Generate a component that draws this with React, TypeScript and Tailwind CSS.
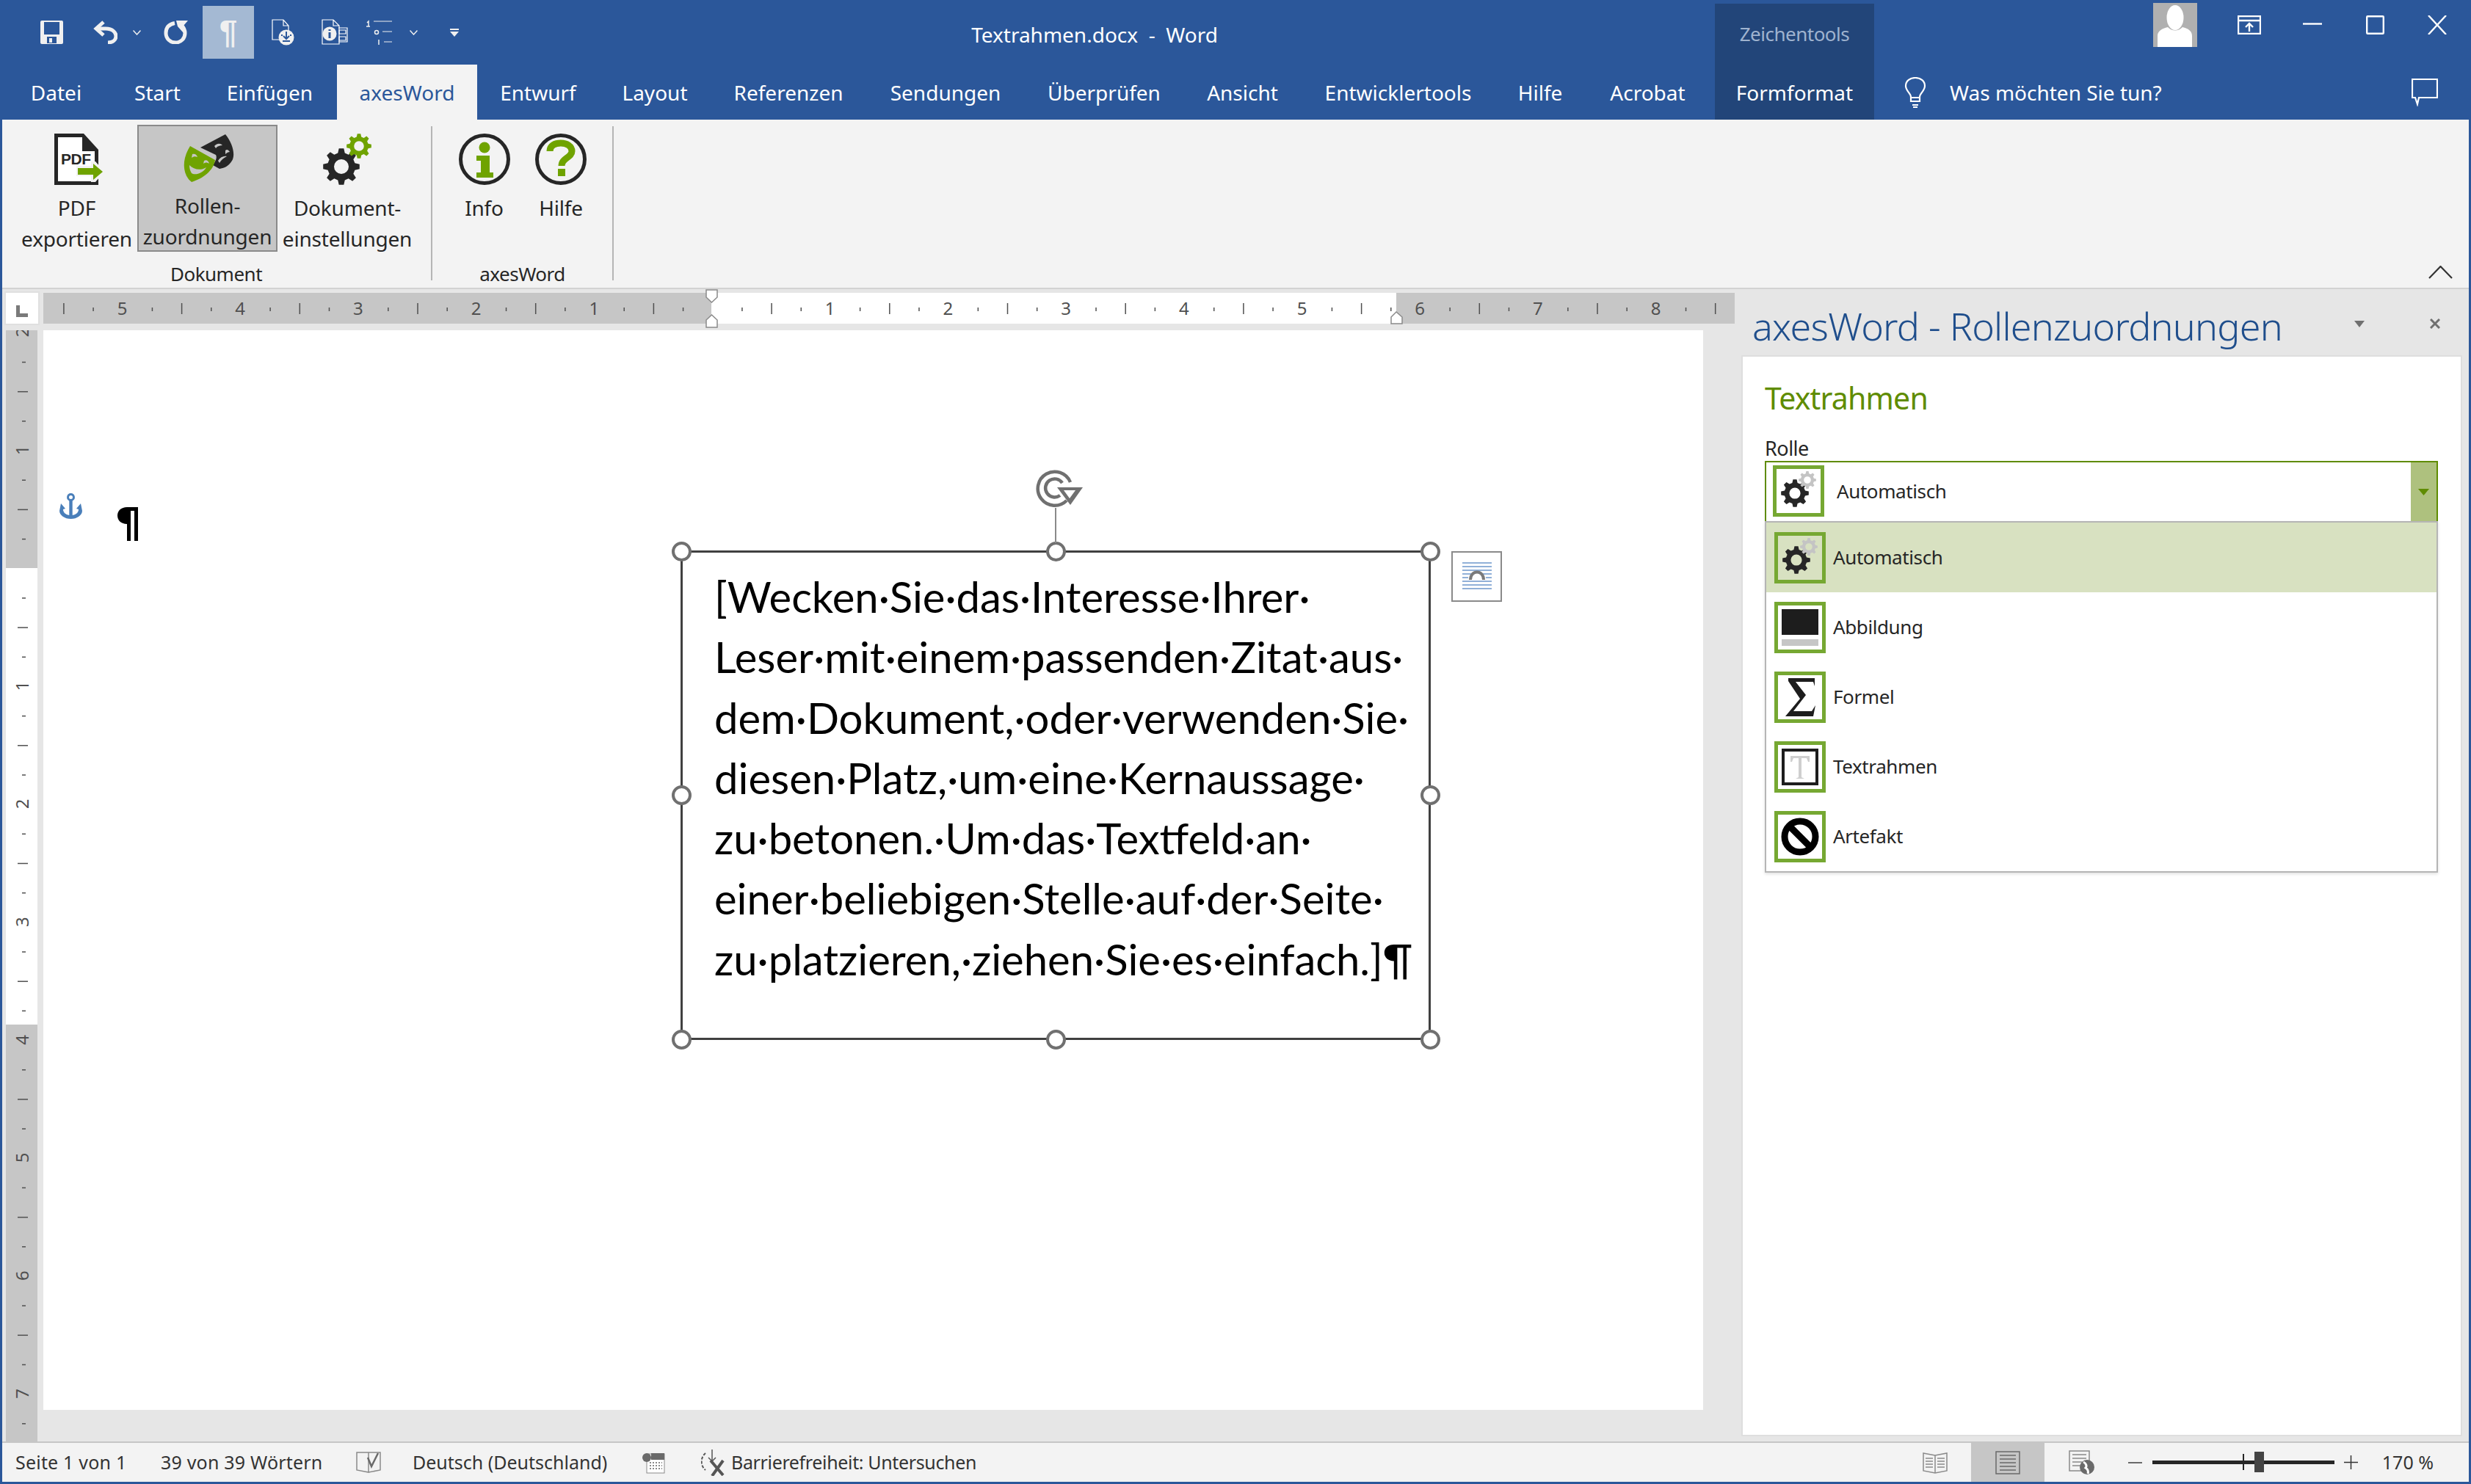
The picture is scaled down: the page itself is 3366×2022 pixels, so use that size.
import type { ReactNode } from 'react'

const TABS = [
  { label: 'Datei', w: 'w-[153px]' },
  { label: 'Start', w: 'w-[123px]' },
  { label: 'Einfügen', w: 'w-[183px]' },
  { label: 'axesWord', w: 'w-[191px]', active: true },
  { label: 'Entwurf', w: 'w-[166px]' },
  { label: 'Layout', w: 'w-[152px]' },
  { label: 'Referenzen', w: 'w-[212px]' },
  { label: 'Sendungen', w: 'w-[216px]' },
  { label: 'Überprüfen', w: 'w-[216px]' },
  { label: 'Ansicht', w: 'w-[161px]' },
  { label: 'Entwicklertools', w: 'w-[263px]' },
  { label: 'Hilfe', w: 'w-[124px]' },
  { label: 'Acrobat', w: 'w-[169px]' },
]

const TEXT_LINES = [
  '[Wecken·Sie·das·Interesse·Ihrer·',
  'Leser·mit·einem·passenden·Zitat·aus·',
  'dem·Dokument,·oder·verwenden·Sie·',
  'diesen·Platz,·um·eine·Kernaussage·',
  'zu·betonen.·Um·das·Textfeld·an·',
  'einer·beliebigen·Stelle·auf·der·Seite·',
  'zu·platzieren,·ziehen·Sie·es·einfach.]¶',
]

const HANDLES = [
  'left-[-15px] top-[-15px]',
  'left-[495px] top-[-15px]',
  'left-[1005px] top-[-15px]',
  'left-[-15px] top-[317px]',
  'left-[1005px] top-[317px]',
  'left-[-15px] top-[650px]',
  'left-[495px] top-[650px]',
  'left-[1005px] top-[650px]',
]

function gearPath(cx: number, cy: number, R: number, r: number, hole: number, n: number) {
  const pts: string[] = []
  const step = (Math.PI * 2) / n
  for (let i = 0; i < n; i++) {
    const a = i * step - Math.PI / 2
    const corners: [number, number][] = [
      [r, a - step * 0.32],
      [R, a - step * 0.17],
      [R, a + step * 0.17],
      [r, a + step * 0.32],
    ]
    corners.forEach(([rad, ang]) => {
      pts.push(`${(cx + rad * Math.cos(ang)).toFixed(2)} ${(cy + rad * Math.sin(ang)).toFixed(2)}`)
    })
  }
  const ring = `M${cx - hole} ${cy}a${hole} ${hole} 0 1 0 ${hole * 2} 0a${hole} ${hole} 0 1 0 ${-hole * 2} 0Z`
  return `M${pts.join('L')}Z${ring}`
}

function Gear(props: { cx: number; cy: number; R: number; fill: string }) {
  const { cx, cy, R, fill } = props
  return <path d={gearPath(cx, cy, R, R * 0.76, R * 0.4, 8)} fill={fill} fillRule="evenodd" />
}

/* Quick access toolbar */
function Qat() {
  const c = '#f0f0f0'
  return (
    <div className="flex items-center w-[1320px]">
      <svg className="ml-[55px]" width="31" height="32" viewBox="0 0 31 32">
        <path fillRule="evenodd" fill={c} d="M2 0H29a2 2 0 0 1 2 2V30a2 2 0 0 1-2 2H2a2 2 0 0 1-2-2V2a2 2 0 0 1 2-2ZM5 2V19H26V2ZM9 22V31H22V22ZM12 24H16V30H12Z" />
      </svg>
      <svg className="ml-[41px]" width="33" height="32" viewBox="0 0 33 32" fill="none" stroke={c} strokeWidth="5">
        <path d="M14 2 L4 11 L14 20" />
        <path d="M4 11H17C27 11 31 17 31 21C31 26 27 30 20 30" />
      </svg>
      <Chevron className="ml-[21px]" color={c} />
      <svg className="ml-[31px]" width="34" height="32" viewBox="0 0 34 32" fill="none">
        <path d="M15 3.5C7 5 3 10 3 17C3 25 9 30 16 30C24 30 29 24 29 17C29 12 27 9 24 6" stroke={c} strokeWidth="5" />
        <path d="M17 0H33L27 7V17L19 8Z" fill={c} />
      </svg>
      <div className="ml-[19px] flex h-[72px] w-[70px] items-center justify-center bg-[#a4b9d3]">
        <span className="font-['Liberation_Sans'] text-[44px] leading-none font-bold text-[#f0f0f0]">¶</span>
      </div>
      <svg className="ml-[24px]" width="32" height="36" viewBox="0 0 32 36" fill="none" stroke="#fff" strokeWidth="1.2">
        <path d="M1 1H16L23 9V28H1ZM16 1V9H23" />
        <circle cx="20" cy="25" r="10.5" fill="#f0f0f0" stroke="none" />
        <path d="M20 17V27M16 23L20 27L24 23M13 22H15M25 22H27M15 30H25" stroke="#2b579a" strokeWidth="2" />
      </svg>
      <svg className="ml-[36px]" width="36" height="36" viewBox="0 0 36 36" fill="none" stroke="#fff" strokeWidth="1.2">
        <path d="M1 1H16L24 9V34H1ZM16 1V9H24M23 12H35V31H23" />
        <circle cx="11" cy="20" r="9.5" fill="#f0f0f0" stroke="none" />
        <path d="M11 14V16M11 18V26" stroke="#2b579a" strokeWidth="3" />
        <path d="M24 15H33V20H24ZM24 24H33V29H24Z" />
      </svg>
      <svg className="ml-[25px]" width="36" height="36" viewBox="0 0 36 36" fill="none" stroke="#f0f0f0" strokeWidth="1.2">
        <path d="M10 3H35M22 17H35M24 31H35" />
        <path d="M1 5 3 3V10M0 10H5" strokeWidth="1.5" />
        <circle cx="14" cy="18" r="2.5" strokeWidth="1.5" />
        <path d="M17 28V35" strokeWidth="1.5" />
      </svg>
      <Chevron className="ml-[23px]" color={c} />
      <svg className="ml-[44px]" width="12" height="11" viewBox="0 0 12 11">
        <path d="M0 0H12V2H0ZM0 4H12L6 11Z" fill="#f0f0f0" />
      </svg>
    </div>
  )
}

function Chevron({ className, color }: { className: string; color: string }) {
  return (
    <svg className={className} width="11" height="7" viewBox="0 0 11 7" fill="none" stroke={color} strokeWidth="1.5">
      <path d="M0.5 0.5L5.5 6L10.5 0.5" />
    </svg>
  )
}

function WindowControls() {
  return (
    <div className="flex self-start mt-[21px]">
      <svg width="32" height="26" viewBox="0 0 32 26" fill="none" stroke="#fff" strokeWidth="2.4">
        <path d="M1 1H31V25H1ZM1 7H31M16 22V12M11 16L16 11L21 16" />
      </svg>
      <svg className="ml-[57px]" width="26" height="26" viewBox="0 0 26 26" fill="none" stroke="#fff" strokeWidth="2.4">
        <path d="M0 11.5H26" />
      </svg>
      <svg className="ml-[60px]" width="25" height="26" viewBox="0 0 25 26" fill="none" stroke="#fff" strokeWidth="2.4">
        <rect x="1.2" y="1.2" width="22.6" height="23.6" rx="1" />
      </svg>
      <svg className="ml-[59px]" width="26" height="26" viewBox="0 0 26 26" fill="none" stroke="#fff" strokeWidth="2.4">
        <path d="M1 0L25 26M25 0L1 26" />
      </svg>
    </div>
  )
}

function Header() {
  return (
    <div className="h-[163px] w-full shrink-0 bg-[#2b579a] text-white">
      <div className="flex h-[88px] items-center">
        <Qat />
        <div className="mt-[5px] w-[342px] whitespace-pre text-center text-[28px] text-white">Textrahmen.docx  -  Word</div>
        <div className="w-[674px]" />
        <div className="mt-[5px] flex w-[217px] items-center justify-center self-stretch bg-[#224579] text-[26px] tracking-[-0.5px] text-[#9fb3cf]">
          Zeichentools
        </div>
        <div className="w-[380px]" />
        <div className="mt-[4px] h-[60px] w-[60px] self-start bg-[#b0b0b0]">
          <svg width="60" height="60" viewBox="0 0 60 60">
            <ellipse cx="30" cy="20" rx="11.5" ry="17" fill="#fff" />
            <path d="M6 60V45C6 38 12 35 20 33C26 39 34 39 40 33C48 35 53 38 53 45V60Z" fill="#fff" />
          </svg>
        </div>
        <div className="w-[55px]" />
        <WindowControls />
      </div>
      <div className="flex h-[75px] items-stretch text-[28px]">
        {TABS.map(tab => (
          <div
            key={tab.label}
            className={`${tab.w} flex items-center justify-center ${tab.active ? 'bg-[#f3f3f3] text-[#2b579a]' : ''}`}
          >
            {tab.label}
          </div>
        ))}
        <div className="ml-[7px] flex w-[217px] items-center justify-center bg-[#224579]">Formformat</div>
        <svg className="ml-[41px] self-center" width="30" height="42" viewBox="0 0 30 42" fill="none" stroke="#fff" strokeWidth="2.2">
          <path d="M9 27C9 22 2 19 2 12C2 5 8 1 15 1C22 1 28 5 28 12C28 19 21 22 21 27V33H9ZM9 28H21" />
          <path d="M11 38H19M12 41H18" />
        </svg>
        <span className="ml-[32px] flex w-[629px] items-center">Was möchten Sie tun?</span>
        <svg className="self-center" width="36" height="38" viewBox="0 0 36 38" fill="none" stroke="#fff" strokeWidth="2.2">
          <path d="M1 1H35V26H10L8 35L5 26H1Z" />
        </svg>
      </div>
    </div>
  )
}

function RibbonButton(props: { w: string; icon: ReactNode; lines: string[]; active?: boolean }) {
  const { w, icon, lines, active } = props
  return (
    <div
      className={`${w} flex h-[173px] flex-col items-center ${active ? 'border-2 border-[#8a8a8a] bg-[#c6c6c6] pt-[11px]' : 'pt-[12px]'}`}
    >
      <div className="flex h-[70px] items-center justify-center">{icon}</div>
      <div className="mt-[10px] whitespace-nowrap text-center text-[28px] leading-[42px] tracking-[-0.2px] text-[#262626]">
        {lines.map(line => (
          <div key={line}>{line}</div>
        ))}
      </div>
    </div>
  )
}

function PdfIcon() {
  return (
    <svg className="ml-[6px]" width="68" height="70" viewBox="0 0 68 70">
      <path d="M0 0H40L60 22V70H0Z" fill="#262626" />
      <path d="M5 5H38V24H55V65H5Z" fill="#fff" />
      <text x="9" y="42" fontFamily="Liberation Sans" fontWeight="700" fontSize="21" fill="#262626" letterSpacing="-0.5">PDF</text>
      <path d="M30 44H50V38H56L68 52L56 66H50V58H30Z" fill="#f3f3f3" />
      <path d="M32 47H53V41L66 52L53 63V56H32Z" fill="#6fa300" />
    </svg>
  )
}

function MasksIcon() {
  const bg = '#c6c6c6'
  return (
    <svg width="72" height="66" viewBox="0 0 72 66">
      <path d="M26 18L60 0C70 12 74 28 69 36C64 44 58 46 52 47L43 42C47 36 49 32 47 28Z" fill="#262626" />
      <path d="M45 16C49 12 53 12 56 15C53 15 49 16 47 19ZM60 22C62 20 64 21 66 24C64 24 62 25 60 27ZM50 36C53 31 58 29 62 30C58 32 54 35 52 39Z" fill={bg} />
      <path d="M12 16L46 35C44 49 30 60 14 65C4 58 -2 38 12 16Z" fill="#6fa300" />
      <path d="M15 27C19 26 21 28 22 31C19 30 17 30 14 32ZM31 36C34 34 37 36 38 40C35 38 33 38 30 40ZM11 42C17 48 26 50 34 45C29 54 18 56 14 53C12 50 11 46 11 42Z" fill={bg} />
    </svg>
  )
}

function GearsIcon() {
  return (
    <svg width="66" height="70" viewBox="0 0 66 70">
      <Gear cx={25} cy={45} R={25} fill="#262626" />
      <Gear cx={49} cy={17} R={17} fill="#6fa300" />
    </svg>
  )
}

function InfoIcon() {
  return (
    <svg width="70" height="70" viewBox="0 0 70 70" fill="none">
      <circle cx="35" cy="35" r="32.5" stroke="#262626" strokeWidth="5" />
      <circle cx="35" cy="19" r="7.5" fill="#6fa300" />
      <path d="M24 30H42V53H47V60H24V53H30V37H24Z" fill="#6fa300" />
    </svg>
  )
}

function HelpIcon() {
  return (
    <svg width="70" height="70" viewBox="0 0 70 70" fill="none">
      <circle cx="35" cy="35" r="32.5" stroke="#262626" strokeWidth="5" />
      <path d="M20 24C20 16 27 13 35 13C43 13 50 17 50 24C50 33 36 33 36 44" stroke="#6fa300" strokeWidth="9" />
      <rect x="31" y="48" width="10" height="10" fill="#6fa300" />
    </svg>
  )
}

function Ribbon() {
  return (
    <div className="mx-[3px] flex h-[229px] shrink-0 bg-[#f3f3f3] pl-[21px]">
      <div className="flex w-[563px] flex-col pt-[7px]">
        <div className="flex gap-[2px]">
          <RibbonButton w="w-[161px]" icon={<PdfIcon />} lines={['PDF', 'exportieren']} />
          <RibbonButton w="w-[191px]" icon={<MasksIcon />} lines={['Rollen-', 'zuordnungen']} active />
          <RibbonButton w="w-[186px]" icon={<GearsIcon />} lines={['Dokument-', 'einstellungen']} />
        </div>
        <div className="mt-[11px] pr-[22px] text-center text-[26px] leading-[38px] tracking-[-0.5px] text-[#262626]">Dokument</div>
      </div>
      <div className="mt-[9px] h-[210px] w-[2px] bg-[#b5b5b5]" />
      <div className="flex w-[245px] flex-col pt-[7px]">
        <div className="ml-[18px] flex">
          <RibbonButton w="w-[105px]" icon={<InfoIcon />} lines={['Info']} />
          <RibbonButton w="w-[104px]" icon={<HelpIcon />} lines={['Hilfe']} />
        </div>
        <div className="mt-[11px] text-center text-[26px] leading-[38px] tracking-[-0.5px] text-[#262626]">axesWord</div>
      </div>
      <div className="mt-[9px] h-[210px] w-[2px] bg-[#b5b5b5]" />
      <svg className="mb-[12px] ml-auto mr-[22px] self-end" width="33" height="18" viewBox="0 0 33 18" fill="none" stroke="#333" strokeWidth="2.2">
        <path d="M1 17L16.5 1L32 17" />
      </svg>
    </div>
  )
}

function HorizontalRuler() {
  const items = []
  for (let k = -22; k <= 34; k++) {
    const x = 911 + k * 40.175
    if (k === 0 || x < 20 || x > 2300) continue
    const m = ((k % 4) + 4) % 4
    if (m === 0) {
      items.push(
        <text key={k} x={x} y={30} textAnchor="middle" fontSize="24" fill="#505050" fontFamily="Noto Sans">
          {Math.abs(k / 4)}
        </text>
      )
    } else if (m === 2) {
      items.push(<rect key={k} x={x} y={14} width={1.5} height={15} fill="#505050" />)
    } else {
      items.push(<rect key={k} x={x} y={20} width={1.5} height={5} fill="#505050" />)
    }
  }
  return (
    <svg className="overflow-visible" width="2304" height="42" viewBox="0 0 2304 42">
      <rect width="2304" height="42" fill="#c6c6c6" />
      <rect x="910" width="933" height="42" fill="#fff" />
      {items}
      <path d="M903 -4H918V6L910.5 13L903 6Z M903 47H918V37L910.5 30L903 37Z" fill="#fff" stroke="#8a8a8a" strokeWidth="1.5" />
      <path d="M1836 42V33L1843 26L1851 33V42Z" fill="#fff" stroke="#8a8a8a" strokeWidth="1.5" />
    </svg>
  )
}

function VerticalRuler() {
  const items = []
  for (let k = -8; k <= 29; k++) {
    const y = 324 + k * 40.175
    if (k === 0) continue
    const m = ((k % 4) + 4) % 4
    if (m === 0) {
      items.push(
        <text key={k} x={0} y={0} textAnchor="middle" fontSize="24" fill="#505050" fontFamily="Noto Sans" transform={`translate(31 ${y}) rotate(-90)`}>
          {Math.abs(k / 4)}
        </text>
      )
    } else if (m === 2) {
      items.push(<rect key={k} x={16} y={y} width={14} height={1.5} fill="#505050" />)
    } else {
      items.push(<rect key={k} x={22} y={y} width={5} height={1.5} fill="#505050" />)
    }
  }
  return (
    <svg width="43" height="1514" viewBox="0 0 43 1514">
      <rect width="43" height="1514" fill="#c6c6c6" />
      <rect y="324" width="43" height="622" fill="#fff" />
      {items}
    </svg>
  )
}

function TextBox() {
  return (
    <div className="absolute left-[868px] top-[300px] h-[667px] w-[1022px] border-[3px] border-[#404040]">
      <div className="pl-[43px] pt-[19px] font-['Lato'] text-[58px] leading-[82.3px] text-black">
        {TEXT_LINES.map(line => (
          <div key={line} className="whitespace-nowrap">
            {line}
          </div>
        ))}
      </div>
      {HANDLES.map(pos => (
        <div key={pos} className={`absolute ${pos} h-[27px] w-[27px] rounded-full border-[4px] border-[#707070] bg-white`} />
      ))}
      <div className="absolute left-[507px] top-[-61px] h-[48px] w-[2px] bg-[#8a8a8a]" />
      <svg className="absolute left-[481px] top-[-113px]" width="64" height="52" viewBox="0 0 64 52" fill="none" stroke="#707070" strokeWidth="4.5">
        <path d="M42 42A23 23 0 1 1 47 17" />
        <path d="M33 35A12.5 12.5 0 1 1 36 18" />
        <path d="M29 24H64L47 48Z" fill="#707070" stroke="none" />
        <path d="M38 28H54L46 39Z" fill="#fff" stroke="none" />
      </svg>
      <div className="absolute left-[1047px] top-[-2px] flex h-[69px] w-[69px] items-center justify-center border-2 border-[#8a8a8a] bg-white">
        <svg width="44" height="44" viewBox="0 0 44 44" fill="none" stroke="#6d96cc" strokeWidth="1.5">
          <path d="M2 3H42M2 8H42M2 13H42M2 18H14M30 18H42M2 23H10M34 23H42M2 28H42M2 33H42M2 38H42" />
          <path d="M13 26C13 12 31 12 31 26" stroke="#7a7a7a" strokeWidth="4" />
        </svg>
      </div>
    </div>
  )
}

function DocArea() {
  return (
    <div className="flex w-[2361px] shrink-0 flex-col bg-[#e6e6e6]">
      <div className="flex h-[56px] items-start">
        <div className="ml-[3px] mt-[3px] flex h-[46px] w-[48px] items-end justify-center border-2 border-[#e0e0e0] bg-white pb-[9px]">
          <svg width="16" height="16" viewBox="0 0 16 16">
            <path d="M0 0H5V11H16V16H0Z" fill="#7a7a7a" />
          </svg>
        </div>
        <div className="ml-[5px] mt-[5px]">
          <HorizontalRuler />
        </div>
      </div>
      <div className="flex flex-1 overflow-hidden">
        <div className="ml-[5px] h-[1514px] w-[43px] shrink-0">
          <VerticalRuler />
        </div>
        <div className="relative ml-[8px] h-[1471px] w-[2261px] bg-white">
          <svg className="absolute left-[22px] top-[222px]" width="31" height="35" viewBox="0 0 31 35">
            <path fillRule="evenodd" fill="#4a7fba" d="M15.5 0a5.5 5.5 0 0 1 2.2 10.5V30C23 29 26 26 26 22L23 21L29 14L31 24C31 30 24 35 15.5 35C7 35 0 30 0 24L2 14L8 21L5 22C5 26 8 29 13.3 30V10.5A5.5 5.5 0 0 1 15.5 0ZM15.5 3a2.5 2.5 0 1 0 0 5a2.5 2.5 0 0 0 0-5Z" />
          </svg>
          <svg className="absolute left-[101px] top-[241px]" width="28" height="46" viewBox="0 0 28 46">
            <path fillRule="evenodd" fill="#000" d="M13 0H28V46H23V5H18V46H13V23C5 23 0 18 0 11.5C0 5 5 0 13 0Z" />
          </svg>
          <TextBox />
        </div>
      </div>
    </div>
  )
}

function RoleIcon({ kind }: { kind: string }) {
  return (
    <svg width="60" height="60" viewBox="0 0 60 60" fill="none">
      {kind === 'auto' && (
        <>
          <Gear cx={25} cy={33} R={19} fill="#262626" />
          <Gear cx={42} cy={15} R={12} fill="#c4c4c4" />
        </>
      )}
      {kind === 'image' && (
        <>
          <rect x="5" y="5" width="50" height="35" fill="#1d1d1d" />
          <rect x="5" y="46" width="50" height="9" fill="#c6c6c6" />
        </>
      )}
      {kind === 'sum' && <path d="M14 4H50V15L48 9H24L38 27L21 49H46L51 41L48 56H10L30 32L14 8Z" fill="#1d1d1d" />}
      {kind === 'text' && (
        <>
          <rect x="7" y="7" width="46" height="46" stroke="#1d1d1d" strokeWidth="4" />
          <path d="M17 15H43V23H41L39 18H32V44L36 46H24L28 44V18H21L19 23H17Z" fill="#cfcfcf" />
        </>
      )}
      {kind === 'none' && (
        <>
          <circle cx="30" cy="30" r="21" stroke="#000" strokeWidth="9" />
          <path d="M16 16L44 44" stroke="#000" strokeWidth="9" />
        </>
      )}
    </svg>
  )
}

function RoleBox({ kind, plain }: { kind: string; plain?: boolean }) {
  return (
    <div className={`h-[70px] w-[70px] shrink-0 border-[5px] border-[#76a832] ${plain ? '' : 'bg-white'}`}>
      <RoleIcon kind={kind} />
    </div>
  )
}

const ROLES = [
  { kind: 'auto', label: 'Automatisch', selected: true },
  { kind: 'image', label: 'Abbildung' },
  { kind: 'sum', label: 'Formel' },
  { kind: 'text', label: 'Textrahmen' },
  { kind: 'none', label: 'Artefakt' },
]

function Panel() {
  return (
    <div className="flex flex-1 flex-col bg-[#e6e6e6] pl-[8px] pr-[9px]">
      <div className="flex h-[90px] shrink-0 items-center pl-[15px] pt-[10px]">
        <span className="whitespace-pre text-[52px] font-light tracking-[-0.75px] text-[#1f4e8c]">axesWord - Rollenzuordnungen</span>
        <svg className="ml-[98px] mb-[6px]" width="14" height="9" viewBox="0 0 14 9">
          <path d="M0 0H14L7 9Z" fill="#707070" />
        </svg>
        <svg className="ml-[89px] mb-[6px]" width="14" height="14" viewBox="0 0 14 14" fill="none" stroke="#707070" strokeWidth="3">
          <path d="M1 1L13 13M13 1L1 13" />
        </svg>
      </div>
      <div className="flex-1 border-2 border-[#dedede] bg-white pl-[30px] pr-[31px] pt-[28px]">
        <div className="text-[41px] leading-[56px] tracking-[-0.8px] text-[#5f8c00]">Textrahmen</div>
        <div className="mt-[24px] text-[27px] leading-[34px] tracking-[-0.5px] text-[#262626]">Rolle</div>
        <div className="flex h-[82px] items-center border-2 border-b-0 border-[#5f8c00] bg-white pb-[2px] pl-[9px]">
          <RoleBox kind="auto" />
          <span className="ml-[17px] flex-1 text-[26px] tracking-[-0.4px] text-[#262626]">Automatisch</span>
          <div className="mb-[-2px] flex h-[calc(100%+2px)] w-[35px] items-center justify-center bg-[#aec17e]">
            <svg width="15" height="9" viewBox="0 0 15 9">
              <path d="M0 0H15L7.5 9Z" fill="#5f8c00" />
            </svg>
          </div>
        </div>
        <div className="border-2 border-[#b5b5b5] shadow-[0_2px_4px_rgba(0,0,0,0.12)]">
          {ROLES.map(role => (
            <div
              key={role.label}
              className={`flex h-[95px] items-center pl-[11px] ${role.selected ? 'bg-[#d8e1c1]' : 'bg-white'}`}
            >
              <RoleBox kind={role.kind} plain={role.selected} />
              <span className="ml-[10px] text-[26px] tracking-[-0.4px] text-[#262626]">{role.label}</span>
            </div>
          ))}
        </div>
      </div>
      <div className="h-[7px] shrink-0" />
    </div>
  )
}

function StatusBar() {
  return (
    <div className="mx-[3px] flex h-[55px] shrink-0 items-center border-t-2 border-[#c6c6c6] bg-[#f3f3f3] text-[25px] text-[#333]">
      <span className="ml-[18px] w-[198px] whitespace-nowrap tracking-[0.2px]">Seite 1 von 1</span>
      <span className="w-[266px] whitespace-nowrap tracking-[0.2px]">39 von 39 Wörtern</span>
      <svg className="w-[77px]" width="34" height="30" viewBox="0 0 77 30" fill="none" stroke="#8a8a8a" strokeWidth="1.5" preserveAspectRatio="xMinYMid">
        <path d="M1 1H17V28L1 25ZM17 28L33 25V1H17" />
        <path d="M16 8L21 20L30 2" stroke="#6a6a6a" strokeWidth="2.5" />
      </svg>
      <span className="w-[313px] whitespace-nowrap">Deutsch (Deutschland)</span>
      <svg className="w-[80px]" width="32" height="30" viewBox="0 0 80 30" preserveAspectRatio="xMinYMid">
        <rect x="6" y="3" width="24" height="26" fill="#fff" stroke="#8a8a8a" />
        <circle cx="6" cy="8" r="6" fill="#6a6a6a" />
        <rect x="12" y="2" width="18" height="9" fill="#6a6a6a" />
        <path d="M10 15H27M10 19H27M10 23H27" stroke="#8a8a8a" strokeWidth="2" strokeDasharray="2 2" />
      </svg>
      <svg className="w-[41px]" width="38" height="36" viewBox="0 0 41 36" fill="none" stroke="#555" strokeWidth="2">
        <path d="M6 5A15 15 0 0 0 6 28" strokeDasharray="4 2" />
        <path d="M15 0V16M10 11L15 16L20 11" strokeWidth="1.5" />
        <path d="M13 15L30 35M30 15L15 36" strokeWidth="4" />
      </svg>
      <span className="whitespace-nowrap tracking-[-0.35px]">Barrierefreiheit: Untersuchen</span>
      <div className="ml-auto flex h-full items-center">
        <svg width="34" height="30" viewBox="0 0 34 30" fill="none" stroke="#8a8a8a" strokeWidth="1.5">
          <path d="M1 2L17 5L33 2V26L17 29L1 26Z" />
          <path d="M17 5V29M4 9H14M4 13H14M4 17H14M4 21H14M20 9H30M20 13H30M20 17H30M20 21H30" strokeDasharray="8 0" />
        </svg>
        <div className="ml-[32px] flex h-full w-[100px] items-center justify-center bg-[#c6c6c6]">
          <svg width="34" height="32" viewBox="0 0 34 32" fill="none" stroke="#6a6a6a" strokeWidth="1.5">
            <path d="M1 1H33V31H1ZM6 6H28M6 11H28M6 16H28M6 21H28M6 26H28" />
          </svg>
        </div>
        <svg className="ml-[33px]" width="36" height="34" viewBox="0 0 36 34" fill="none" stroke="#8a8a8a" strokeWidth="1.5">
          <path d="M1 1H28V28H1ZM5 6H24M5 11H24M5 16H18M5 21H18" />
          <circle cx="25" cy="23" r="10" fill="#6a6a6a" stroke="none" />
          <path d="M20 16C24 18 25 22 23 24C26 26 27 29 26 32" stroke="#fff" strokeWidth="3" />
        </svg>
        <div className="ml-[45px] h-[2px] w-[19px] bg-[#6a6a6a]" />
        <div className="relative ml-[14px] h-[5px] w-[248px] bg-[#262626]">
          <div className="absolute left-[123px] top-[-9px] h-[22px] w-[2px] bg-[#262626]" />
          <div className="absolute left-[139px] top-[-12px] h-[28px] w-[13px] bg-[#444]" />
        </div>
        <svg className="ml-[13px]" width="19" height="19" viewBox="0 0 19 19" fill="none" stroke="#333" strokeWidth="1.5">
          <path d="M9.5 0V19M0 9.5H19" />
        </svg>
        <span className="ml-[33px] mr-[48px] whitespace-nowrap">170 %</span>
      </div>
    </div>
  )
}

export default function App() {
  return (
    <div className="flex h-[2022px] w-[3366px] flex-col overflow-hidden bg-[#2b579a] font-['Noto_Sans',sans-serif]">
      <Header />
      <Ribbon />
      <div className="mx-[3px] flex h-[1572px] shrink-0 overflow-hidden border-t-2 border-[#d2d2d2]">
        <DocArea />
        <Panel />
      </div>
      <StatusBar />
    </div>
  )
}
